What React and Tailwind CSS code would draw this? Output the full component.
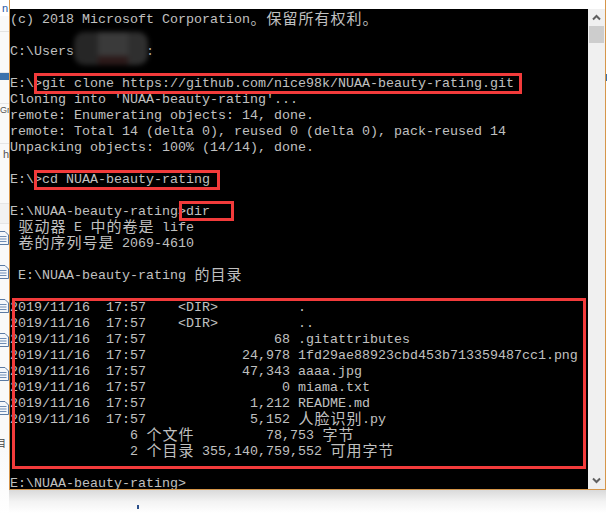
import React from 'react';

const CJK = /[\u2E80-\u9FFF\u3000-\u303F\uFF00-\uFFEF]/;

function Line({ text = '' }) {
  const parts = [];
  let buf = '';
  for (const ch of text) {
    if (CJK.test(ch)) {
      if (buf) {
        parts.push([0, buf]);
        buf = '';
      }
      parts.push([1, ch]);
    } else buf += ch;
  }
  if (buf) parts.push([0, buf]);
  return (
    <div className="h-[16px] leading-[16px] whitespace-pre">
      {parts.map(([c, s], i) =>
        c ? (
          <span
            key={i}
            className="inline-block w-[16px] h-[16px] text-center align-top text-[15px] leading-[16px] font-['Noto_Sans_CJK_SC',sans-serif]"
          >
            {s}
          </span>
        ) : (
          <span key={i} className="inline-block align-top h-[16px] pt-[2.5px] leading-[13.5px]">
            {s}
          </span>
        )
      )}
    </div>
  );
}

const before = [
  '(c) 2018 Microsoft Corporation。保留所有权利。',
  '',
];

const after = [
  '',
  'E:\\>git clone https://github.com/nice98k/NUAA-beauty-rating.git',
  "Cloning into 'NUAA-beauty-rating'...",
  'remote: Enumerating objects: 14, done.',
  'remote: Total 14 (delta 0), reused 0 (delta 0), pack-reused 14',
  'Unpacking objects: 100% (14/14), done.',
  '',
  'E:\\>cd NUAA-beauty-rating',
  '',
  'E:\\NUAA-beauty-rating>dir',
  ' 驱动器 E 中的卷是 life',
  ' 卷的序列号是 2069-4610',
  '',
  ' E:\\NUAA-beauty-rating 的目录',
  '',
  '2019/11/16  17:57    <DIR>          .',
  '2019/11/16  17:57    <DIR>          ..',
  '2019/11/16  17:57                68 .gitattributes',
  '2019/11/16  17:57            24,978 1fd29ae88923cbd453b713359487cc1.png',
  '2019/11/16  17:57            47,343 aaaa.jpg',
  '2019/11/16  17:57                 0 miama.txt',
  '2019/11/16  17:57             1,212 README.md',
  '2019/11/16  17:57             5,152 人脸识别.py',
  '               6 个文件         78,753 字节',
  '               2 个目录 355,140,759,552 可用字节',
  '',
  'E:\\NUAA-beauty-rating>',
];

function DocIcon() {
  return (
    <svg width="9" height="14" viewBox="0 0 9 14" className="block">
      <path d="M-3 0.5 H5 L8.5 4 V13.5 H-3" fill="#f4f7fb" stroke="#5b7aa3" strokeWidth="1" />
      <path d="M0 5.5 H6.5 M0 8 H6.5 M0 10.5 H6.5" stroke="#6f8db5" strokeWidth="1" />
    </svg>
  );
}

function Chevron({ down }) {
  return (
    <svg width="9" height="7" viewBox="0 0 9 7" className="block">
      <polyline
        points={down ? '1,1.5 4.5,5 8,1.5' : '1,5.5 4.5,2 8,5.5'}
        fill="none"
        stroke="#606060"
        strokeWidth="2"
      />
    </svg>
  );
}

function LeftStrip() {
  return (
    <div className="w-[9px] h-[513px] bg-[#f9f9f9] flex flex-col overflow-hidden shrink-0">
      <div className="h-[16px] bg-white text-[11px] leading-[16px] text-[#1f5aa6] font-['Liberation_Sans',sans-serif] text-right pr-[1px]">n</div>
      <div className="h-[16px] border-b border-[#e3e3e3]" />
      <div className="h-[41px] border-b border-[#e6e6e6]" />
      <div className="h-[7px] bg-[#3b72ad]" />
      <div className="h-[24px] border-b border-[#e6e6e6]" />
      <div className="h-[12px] text-[9px] leading-[12px] text-[#555] font-['Liberation_Sans',sans-serif] whitespace-nowrap overflow-hidden">Gra</div>
      <div className="h-[28px] border-b border-[#e6e6e6]" />
      <div className="h-[20px] text-[11px] leading-[20px] text-[#555] font-['Liberation_Sans',sans-serif] text-right">h</div>
      <div className="h-[40px] border-b border-[#e6e6e6]" />
      <div className="h-[20px] border-b border-[#e6e6e6] bg-[#f2f2f2]" />
      <div className="flex flex-col gap-[20px] mt-[7px]">
        <DocIcon />
        <DocIcon />
        <DocIcon />
        <DocIcon />
        <DocIcon />
        <DocIcon />
      </div>
      <div className="mt-[22px] h-[12px] w-[9px] overflow-hidden">
        <div className="text-[10px] leading-[12px] text-[#444] font-['Noto_Sans_CJK_SC',sans-serif] whitespace-nowrap -ml-[4px]">目</div>
      </div>
      <div className="flex-1 bg-gradient-to-b from-[#f9f9f9] to-white" />
    </div>
  );
}

function RedBox({ className }) {
  return <div className={'absolute border-[3px] border-[#f23b3b] ' + className} />;
}

export default function App() {
  return (
    <div className="w-[607px] h-[513px] bg-white flex overflow-hidden">
      <LeftStrip />
      <div className="w-[597px] flex flex-col shrink-0">
        <div className="h-[490px] flex flex-col border-l border-r border-b border-[#d6964a]">
          <div className="h-[9px] bg-white shrink-0" />
          <div className="flex flex-1 min-h-0">
            <div className="relative flex-1 bg-black pt-[1px] overflow-hidden text-[#c0c0c0] text-[13.333px] font-['Liberation_Mono','Noto_Sans_CJK_SC',monospace]">
              {before.map((t, i) => (
                <Line key={'b' + i} text={t} />
              ))}
              <div className="h-[16px] leading-[16px] whitespace-pre">
                <span className="inline-block align-top h-[16px] pt-[2.5px] leading-[13.5px]">{'C:\\Users'}</span>
                <span className="inline-block align-top w-[72px] h-[16px]" />
                <span className="inline-block align-top h-[16px] pt-[2.5px] leading-[13.5px]">:</span>
              </div>
              {after.map((t, i) => (
                <Line key={'a' + i} text={t} />
              ))}

              <div className="absolute left-[64px] top-[23px] w-[74px] h-[33px] blur-[2.5px] flex">
                <div className="w-[24px] h-full rounded-l-[10px] bg-[#262626]" />
                <div className="w-[30px] h-full flex flex-col">
                  <div className="flex-1 bg-[#3a3a3a]" />
                  <div className="h-[9px] bg-[#2c1a1a]" />
                </div>
                <div className="w-[20px] h-full rounded-r-[10px] bg-[#2f2f2f]" />
              </div>

              <RedBox className="left-[24px] top-[64px] w-[488px] h-[21px]" />
              <RedBox className="left-[24px] top-[161px] w-[186px] h-[20px]" />
              <RedBox className="left-[169px] top-[192px] w-[55px] h-[20px]" />
              <RedBox className="left-[2px] top-[289px] w-[574px] h-[171px]" />
            </div>
            <div className="w-[17px] bg-[#f0f0f0] flex flex-col shrink-0">
              <div className="h-[17px] flex items-center justify-center">
                <Chevron />
              </div>
              <div className="h-[17px] mx-[1px] bg-[#cdcdcd]" />
              <div className="flex-1" />
              <div className="h-[17px] flex items-center justify-center">
                <Chevron down />
              </div>
            </div>
          </div>
        </div>
        <div className="flex-1 bg-gradient-to-b from-[#dadada] via-[#f3f3f3] to-white relative">
          <div className="w-[2px] h-[4px] bg-[#2a4f8a] ml-[128px] mt-[15px]" />
        </div>
      </div>
      <div className="w-[1px] flex flex-col">
        <div className="h-[74px] bg-white" />
        <div className="h-[7px] bg-[#3b72ad]" />
        <div className="flex-1 bg-white" />
      </div>
    </div>
  );
}
